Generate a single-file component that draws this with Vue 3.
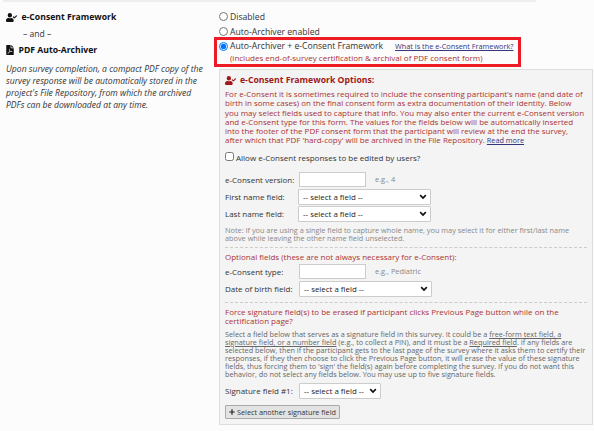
<script setup>
const introLines = [
  'For e-Consent it is sometimes required to include the consenting participant\'s name (and date of',
  'birth in some cases) on the final consent form as extra documentation of their identity. Below',
  'you may select fields used to capture that info. You may also enter the current e-Consent version',
  'and e-Consent type for this form. The values for the fields below will be automatically inserted',
  'into the footer of the PDF consent form that the participant will review at the end the survey,',
]
const aboutLines = [
  'Upon survey completion, a compact PDF copy of the',
  'survey response will be automatically stored in the',
  'project\'s File Repository, from which the archived',
  'PDFs can be downloaded at any time.',
]
</script>

<template>
  <div class="page">
    <div class="strip"></div>
    <div class="columns">
      <aside class="side">
        <h2 class="title">
          <svg class="user" viewBox="0 0 640 512"><path d="M224 256A128 128 0 1 0 224 0a128 128 0 0 0 0 256zm90 32h-17a174 174 0 0 1-146 0h-17C60 288 0 348 0 422v42c0 27 21 48 48 48h352c27 0 48-21 48-48v-42c0-74-60-134-134-134zM636 159l-28-28c-5-5-12-5-17 0L486 236l-46-46c-5-5-12-5-17 0l-28 28c-5 5-5 12 0 17l82 83c5 5 13 5 18 0l141-142c5-5 5-12 0-17z" /></svg>
          <span>e-Consent Framework</span>
        </h2>
        <div class="and">– and –</div>
        <h2 class="title pdf-title">
          <svg class="pdf" viewBox="0 0 384 512"><path fill-rule="evenodd" d="M24 0h200v136c0 13 11 24 24 24h136v328c0 13-11 24-24 24H24c-13 0-24-11-24-24V24C0 11 11 0 24 0zm232 0h6l122 122v6H256zM178 190c-28 0-25 62-9 96-12 34-24 55-40 81-72 30-75 73-44 73 29 0 54-46 70-71 28-10 48-16 74-20 45 26 79 15 79-7 0-27-47-29-82-24-20-14-30-27-42-49 13-43 12-79-6-79zm-1 25c7 10 4 27 0 43-7-21-6-34 0-43zm9 94c8 13 15 21 27 30l-45 15c8-15 12-27 18-45zM116 388c-10 16-21 28-30 31 3-12 15-23 30-31zm150-48c17 0 30 3 25 9-6 2-16-3-25-9z" /></svg>
          <span>PDF Auto-Archiver</span>
        </h2>
        <p class="about"><span v-for="line in aboutLines" :key="line" class="line">{{ line }}</span></p>
      </aside>

      <main class="main">
        <label class="choice"><input type="radio" name="mode" class="radio" /><span>Disabled</span></label>
        <label class="choice second"><input type="radio" name="mode" class="radio" /><span>Auto-Archiver enabled</span></label>
        <div class="highlight">
          <div class="picked">
            <label class="choice"><input type="radio" name="mode" class="radio" checked /><span>Auto-Archiver + e-Consent Framework</span></label>
            <a class="link what">What is the e-Consent Framework?</a>
          </div>
          <div class="includes">(includes end-of-survey certification &amp; archival of PDF consent form)</div>
        </div>

        <section class="panel">
          <h3 class="heading">
            <svg class="user" viewBox="0 0 640 512"><path d="M224 256A128 128 0 1 0 224 0a128 128 0 0 0 0 256zm90 32h-17a174 174 0 0 1-146 0h-17C60 288 0 348 0 422v42c0 27 21 48 48 48h352c27 0 48-21 48-48v-42c0-74-60-134-134-134zM636 159l-28-28c-5-5-12-5-17 0L486 236l-46-46c-5-5-12-5-17 0l-28 28c-5 5-5 12 0 17l82 83c5 5 13 5 18 0l141-142c5-5 5-12 0-17z" /></svg>
            <span>e-Consent Framework Options:</span>
          </h3>
          <p class="intro">
            <span v-for="line in introLines" :key="line" class="line">{{ line }}</span>
            <span class="line">after which that PDF 'hard-copy' will be archived in the File Repository. <a class="link more">Read more</a></span>
          </p>
          <label class="allow"><input type="checkbox" class="check" /><span>Allow e-Consent responses to be edited by users?</span></label>

          <div class="row version"><span class="name">e-Consent version:</span><input class="text" /><span class="hint">e.g., 4</span></div>
          <div class="row pick"><span class="name">First name field:</span><span class="select"><span>-- select a field --</span><svg class="chev" viewBox="0 0 8 6"><path d="M1.2 1.2 4 4 6.8 1.2" /></svg></span></div>
          <div class="row pick"><span class="name">Last name field:</span><span class="select"><span>-- select a field --</span><svg class="chev" viewBox="0 0 8 6"><path d="M1.2 1.2 4 4 6.8 1.2" /></svg></span></div>
          <p class="note">
            <span class="line">Note: If you are using a single field to capture whole name, you may select it for either first/last name</span>
            <span class="line">above while leaving the other name field unselected.</span>
          </p>

          <div class="group optional">
            <div class="sub">Optional fields (these are not always necessary for e-Consent):</div>
            <div class="row type"><span class="name">e-Consent type:</span><input class="text" /><span class="hint">e.g., Pediatric</span></div>
            <div class="row birth"><span class="name">Date of birth field:</span><span class="select"><span>-- select a field --</span><svg class="chev" viewBox="0 0 8 6"><path d="M1.2 1.2 4 4 6.8 1.2" /></svg></span></div>
          </div>

          <div class="group force">
            <div class="sub">
              <span class="line">Force signature field(s) to be erased if participant clicks Previous Page button while on the</span>
              <span class="line">certification page?</span>
            </div>
            <p class="explain">
              <span class="line">Select a field below that serves as a signature field in this survey. It could be a <u>free-form text field, a</u></span>
              <span class="line"><u>signature field, or a number field</u> (e.g., to collect a PIN), and it must be a <u>Required field</u>. If any fields are</span>
              <span class="line">selected below, then if the participant gets to the last page of the survey where it asks them to certify their</span>
              <span class="line">responses, if they then choose to click the Previous Page button, it will erase the value of these signature</span>
              <span class="line">fields, thus forcing them to 'sign' the field(s) again before completing the survey. If you do not want this</span>
              <span class="line">behavior, do not select any fields below. You may use up to five signature fields.</span>
            </p>
            <div class="row signature"><span class="name">Signature field #1:</span><span class="select short"><span>-- select a field --</span><svg class="chev" viewBox="0 0 8 6"><path d="M1.2 1.2 4 4 6.8 1.2" /></svg></span></div>
            <button class="add"><svg class="plus" viewBox="0 0 6 6"><path d="M3 .3v5.4M.3 3h5.4" /></svg><span>Select another signature field</span></button>
          </div>
        </section>
      </main>
    </div>
  </div>
</template>

<style>
body { background: #fcfcfc; overflow: hidden; }
</style>

<style scoped>
* { box-sizing: border-box; }
.page { width: 594px; height: 431px; font-family: "Open Sans", sans-serif; font-size: 8px; color: #333; background: #fcfcfc; white-space: nowrap; }
h2, h3, p { margin: 0; }
.line { display: block; }
.strip { width: 533px; height: 2px; margin-left: 3px; background: #eee; }
.columns { display: flex; }
.side { width: 214px; flex: none; padding: 9px 0 0 6px; }
.title { display: flex; align-items: center; gap: 4.5px; height: 12px; font-size: 8.65px; line-height: 12px; font-weight: 700; color: #111; }
.user { width: 11px; height: 9px; fill: currentColor; flex: none; }
.pdf { width: 8px; height: 10px; fill: currentColor; flex: none; }
.and { height: 12px; margin: 5px 0 4px 17px; line-height: 12px; font-size: 8.6px; }
.about { margin-top: 7px; font-size: 8.6px; line-height: 12px; font-style: italic; }
.main { width: 380px; flex: none; padding-top: 7px; }
.choice { display: flex; align-items: center; height: 14px; padding-left: 5px; font-size: 8.65px; line-height: 14px; }
.choice span { padding-top: 1px; }
.second { margin-top: 1px; }
.radio { width: 9px; height: 9px; margin: 0 2px 0 0; }
.highlight { width: 307px; height: 30px; margin-top: -1px; border: 3px solid #ed1c24; }
.picked { display: flex; align-items: center; height: 12px; }
.picked .choice { padding-left: 2px; height: 12px; }
.picked .choice span { padding-top: 0; }
.link { color: #35357f; text-decoration: underline; }
.what { margin-left: 12px; font-size: 7.32px; }
.more { font-size: 7.3px; line-height: 1; }
.includes { padding-left: 13px; font-size: 8px; line-height: 12px; color: #a33; }
.panel { width: 374px; height: 356px; margin: 2px 0 0 5px; padding: 4px 5px 0; border: 1px solid #ddd; background: #f4f4f4; }
.heading { display: flex; align-items: center; gap: 4px; height: 12px; font-size: 8.68px; font-weight: 700; color: #a01818; }
.intro { margin-top: 3px; line-height: 9.3px; font-size: 7.98px; color: #a33; }
.allow { display: flex; align-items: center; height: 12px; margin-top: 6.2px; }
.allow span { padding-top: 2px; }
.check { width: 9px; height: 9px; margin: 0 2px 0 0; }
.row { display: flex; align-items: center; height: 16px; }
.name { width: 73px; flex: none; padding-bottom: 1px; }
.text { width: 67px; height: 15px; margin: 0 0 0 1px; padding: 0; border: 1px solid #ccc; background: #fff; }
.hint { margin-left: 9px; padding-bottom: 1px; font-size: 7.4px; color: #888; }
.select { display: flex; align-items: center; justify-content: space-between; width: 133px; height: 16px; padding: 0 3px 0 4px; border: 1px solid #ccc; border-radius: 1px; background: #fff; font-size: 7.9px; color: #222; }
.chev { width: 8px; height: 6px; fill: none; stroke: #111; stroke-width: 1.7; }
.version { margin-top: 9px; }
.pick { margin-top: 1px; }
.note { margin-top: 4px; font-size: 7.33px; line-height: 8px; color: #888; }
.group { border-top: 1px dashed #ccc; }
.optional { margin-top: 5px; padding-top: 4px; }
.sub { line-height: 9.3px; color: #a33; }
.type { margin-top: 2.7px; }
.birth { margin-top: 1px; }
.birth .select, .signature .select { margin-left: 1px; }
.force { margin-top: 5px; padding-top: 4px; }
.explain { margin-top: 4.2px; font-size: 7.31px; line-height: 8px; color: #666; }
.signature { margin-top: 5.2px; }
.select.short { width: 82px; }
.add { display: flex; align-items: center; gap: 2px; width: 115px; height: 14px; margin-top: 6px; padding: 0 3px; border: 1px solid #aaa; border-radius: 1px; background: #e3e3e3; color: #333; font: 7.25px "Open Sans", sans-serif; }
.plus { width: 6px; height: 6px; fill: none; stroke: #222; stroke-width: 1.2; flex: none; }
</style>
